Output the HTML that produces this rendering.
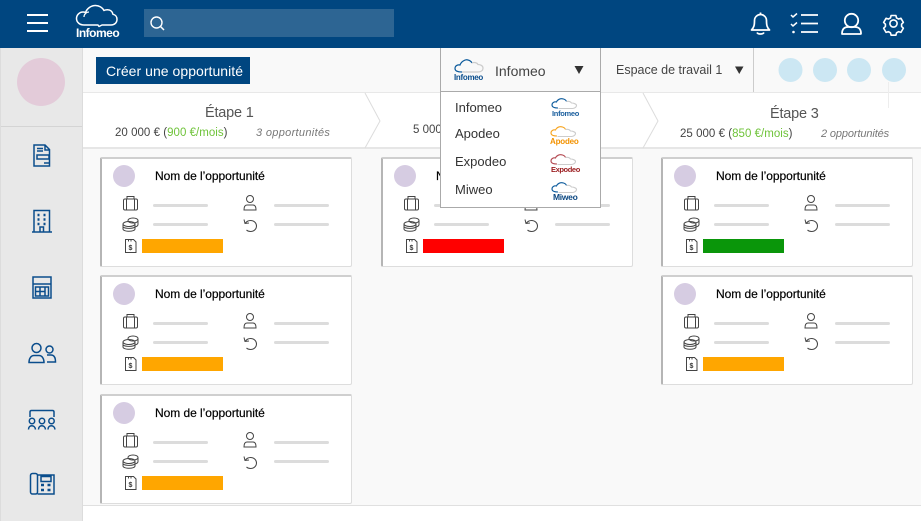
<!DOCTYPE html>
<html lang="fr"><head><meta charset="utf-8"><title>Infomeo</title>
<style>
html,body{margin:0;padding:0}
body{width:921px;height:521px;position:relative;overflow:hidden;background:#f9f9f9;font-family:"Liberation Sans",sans-serif;color:#333}
.a{position:absolute;box-sizing:border-box}
.t{position:absolute;white-space:nowrap;line-height:1}
svg{position:absolute;overflow:visible}
.card{position:absolute;box-sizing:border-box;width:252px;height:110px;background:#fff;border:1px solid #ddd;border-left:2px solid #b5b5b5;border-top:2px solid #cfcfcf;border-radius:2px}
.card .c{position:absolute;left:11px;top:6px;width:22px;height:22px;border-radius:50%;background:#d6cce2}
.card .n{position:absolute;left:53px;top:10px;font-size:12px;line-height:14px;color:#000;white-space:nowrap;letter-spacing:-.05px;-webkit-text-stroke:.2px #000}
.card .l{position:absolute;width:55px;height:3px;border-radius:2px;background:#dcdcdc}
.card .b{position:absolute;left:40px;top:80px;width:81px;height:14px}
.card svg{fill:none;stroke:#444;stroke-width:1}
</style></head><body>

<!-- header -->
<div class="a" style="left:0;top:0;width:921px;height:48px;background:#004680"></div>
<div class="a" style="left:144px;top:9px;width:250px;height:28px;background:#2d6593"></div>
<svg style="left:0;top:0" width="921" height="48" fill="none" stroke="#fff" stroke-width="2">
<path d="M27 15h21M27 23h21M27 31h21"/>
<path d="M98 25H84c-4 0-7.500-2.500-7.500-6.500 0-3.500 3-6.500 6.500-6.500 1 0 1.500 0 2.500.5C87 8.500 91 5.500 95.500 5.500c3.500 0 7 2 8.500 5 1-.5 2-.7 3.500-.7 3 0 5 2 5.500 4.500 2.500.5 4 2.500 4 5 0 3.500-2.500 5.700-6 5.700H102l-3 1.500z" stroke-width="1.500" stroke-linejoin="round"/>
<path d="M84 17c0-3 2.500-5 5-5" stroke-width="1.200"/>
<circle cx="156.500" cy="22.500" r="5.500" stroke-width="1.400"/><path d="M160.500 26.500l3.500 3.500" stroke-width="1.500"/>
<!-- bell -->
<path d="M751.500 30c2.500-2.500 3-5 3-9.500 0-3.500 3-6 6-6s6 2.500 6 6c0 4.500.5 7 3 9.500z" stroke-width="1.700" stroke-linejoin="round"/><path d="M760.500 12.500v2M757 32.500c1 2 6 2 7 0" stroke-width="1.700"/>
<!-- tasks -->
<path d="M791 15l2 2 4-3.500M791 24l2 2 4-3.500" stroke-width="1.500"/><path d="M801 15h17M801 23.500h17M801 32h17" stroke-width="1.800"/><circle cx="793.500" cy="32" r="1.300" fill="#fff" stroke="none"/>
<!-- user -->
<circle cx="851.500" cy="20.500" r="6.700" stroke-width="1.800"/><path d="M842 34c0-4.500 2-7 6-7h7c4 0 6 2.500 6 6.500 0 .5 0 .5-.5.5z" stroke-width="1.800" stroke-linejoin="round"/>
<!-- gear -->
<circle cx="893.500" cy="23.500" r="3.600" stroke-width="1.600"/>
<g transform="translate(893.500 23.500) scale(.8) translate(-893.500 -23)"><path d="M890.500 13.500h6l.8 3 2.500 1.400 3-.9 3 5.200-2.200 2.200v2.800l2.200 2.200-3 5.200-3-.9-2.500 1.400-.8 3h-6l-.8-3-2.500-1.400-3 .9-3-5.200 2.200-2.200v-2.800l-2.200-2.200 3-5.200 3 .9 2.500-1.400z" stroke-width="2" stroke-linejoin="round" transform="translate(0 -.5)"/></g>
</svg>
<div class="t" style="left:76px;top:27px;font-size:12px;font-weight:bold;color:#fff;letter-spacing:-.5px">Infomeo</div>

<!-- sidebar -->
<div class="a" style="left:0;top:48px;width:83px;height:473px;background:#e8e8e8;border-left:1px solid #dcdcdc;border-right:1px solid #dcdcdc"></div>
<div class="a" style="left:1px;top:126px;width:81px;height:1px;background:#d4d4d4"></div>
<div class="a" style="left:17px;top:58px;width:48px;height:48px;border-radius:50%;background:#e3cbd9"></div>
<svg style="left:0;top:0" width="83" height="521" fill="none" stroke="#0a4d8c" stroke-width="1.500">
<path d="M34 145h11l4.500 4.500V166H34zM45 145v5h4.500M37 148.500h6M37 151h6M37 155h12v4H37zM44 163h5"/>
<path d="M34 210.500h15.500V232H34zM32 232H52M40 232v-5h3.500v5"/>
<path d="M37.500 215h2M43.500 215h2M37.500 219.500h2M43.500 219.500h2M37.500 224h2M43.500 224h2" stroke-width="2.500"/>
<path d="M33 277h18v21H33zM33 284h18M35.500 287h13v9h-13zM35.500 291.500h10M40 287v9M45 287v9"/>
<circle cx="36.500" cy="348" r="4.500"/><circle cx="49.500" cy="349.500" r="3.500"/>
<path d="M29 362.500c0-4 2-7 5-7h5c3 0 5 3 5 7zM47 355h4c3 0 4.500 2.500 4.500 7H47"/>
<path d="M30 417v-5c0-1 .5-1.500 1.500-1.500h21c1 0 1.500.5 1.500 1.500v5"/>
<circle cx="32" cy="421" r="2.700"/><circle cx="42" cy="421" r="2.700"/><circle cx="51.500" cy="421" r="2.700"/>
<path d="M28.500 429.500c0-5 6.500-5 7 0M38.500 429.500c0-5 6.500-5 7 0M48 429.500c0-5 6.500-5 7 0"/>
<rect x="30.500" y="473.500" width="7" height="20.500" rx="2"/><path d="M37.500 475h16.500v19H37.500M41 476.500h10v5H41z"/>
<path d="M41 485h3M47.500 485h3M41 490h3M47.500 490h3" stroke-width="2.500"/>
</svg>

<!-- toolbar -->
<div class="a" style="left:83px;top:48px;width:838px;height:44px;background:#f9f9f9"></div>
<div class="a" style="left:96px;top:57px;width:154px;height:27px;background:#004680"></div>
<div class="t" style="left:106px;top:64px;font-size:14px;color:#fff;letter-spacing:.04px">Créer une opportunité</div>

<!-- stage bar -->
<div class="a" style="left:83px;top:92px;width:838px;height:57px;background:#fff;border-top:1px solid #e8e8e8;border-bottom:2px solid #e6e6e6"></div>
<svg style="left:0;top:0" width="921" height="150" fill="none" stroke="#dcdcdc">
<path d="M365 93l15 28-15 27M643 93l15 28-15 27"/>
</svg>
<div class="t" style="left:205px;top:106px;font-size:14.500px;color:#555;letter-spacing:-.2px">Étape 1</div>
<div class="t" style="left:115px;top:128px;font-size:11.500px;color:#444;letter-spacing:.03px">20 000 € (<span style="color:#6fc33a">900 €/mois</span>)</div>
<div class="t" style="left:256px;top:128px;font-size:11px;color:#777;font-style:italic;letter-spacing:.32px">3 opportunités</div>
<div class="t" style="left:413px;top:125px;font-size:11.500px;color:#444">5 000</div>
<div class="t" style="left:770px;top:107px;font-size:14.500px;color:#555;letter-spacing:-.2px">Étape 3</div>
<div class="t" style="left:680px;top:129px;font-size:11.500px;color:#444;letter-spacing:.03px">25 000 € (<span style="color:#6fc33a">850 €/mois</span>)</div>
<div class="t" style="left:821px;top:129px;font-size:11px;color:#777;font-style:italic;letter-spacing:-.12px">2 opportunités</div>

<!-- workspace / circles -->
<div class="t" style="left:616px;top:64px;font-size:12.500px;color:#444">Espace de travail 1</div>
<svg style="left:0;top:0" width="921" height="110">
<path d="M735 66.500h8.500l-4.250 7.500z" fill="#333"/>
<path d="M753.500 48v44" stroke="#ccc" fill="none"/>
<circle cx="790.500" cy="70" r="12" fill="#cce7f3"/><circle cx="825" cy="70" r="12" fill="#cce7f3"/><circle cx="859" cy="70" r="12" fill="#cce7f3"/><circle cx="894" cy="70" r="12" fill="#cce7f3"/>
<path d="M888.500 82v26" stroke="#ededed" fill="none"/>
</svg>

<!-- cards -->
<div class="card" style="left:100px;top:157px"><div class="c"></div><div class="n">Nom de l’opportunité</div><div class="l" style="left:51px;top:45px"></div><div class="l" style="left:172px;top:45px"></div><div class="l" style="left:51px;top:64px"></div><div class="l" style="left:172px;top:64px"></div><div class="b" style="background:#ffa600"></div><svg style="left:0;top:0" width="250" height="105"><rect x="21.500" y="40" width="14" height="11" rx="1.500"/><path d="M25 40v-2.500h7V40M24.500 40v11M32.500 40v11"/><ellipse cx="31" cy="61.500" rx="5" ry="2.500"/><ellipse cx="27" cy="65" rx="6" ry="2.500"/><path d="M21 65v5c0 3 12 3 12 0v-5M21 67.500c0 2.500 12 2.500 12 0M36 61.500v4c0 1-1 2-3 2.500"/><path d="M23.500 80.500h8l2.500 2.500v10.500H23.500zM26.500 80.500v2M29 80.500v2"/><text x="26.500" y="91" font-size="7" font-weight="bold" fill="#333" stroke="none" font-family="Liberation Sans">$</text><circle cx="148" cy="40" r="3.500"/><path d="M142 51c0-3.500 1-5 3-5h6c2 0 3 1.500 3 5z"/><path d="M142 60.500l1 4 4-.5M143 64.500c1.500-2 3.500-3 5.500-3 3.500 0 6 2.500 6 5.500s-2.500 5.500-6 5.500c-1.500 0-3-.5-4-1.500"/></svg></div>
<div class="card" style="left:100px;top:275px"><div class="c"></div><div class="n">Nom de l’opportunité</div><div class="l" style="left:51px;top:45px"></div><div class="l" style="left:172px;top:45px"></div><div class="l" style="left:51px;top:64px"></div><div class="l" style="left:172px;top:64px"></div><div class="b" style="background:#ffa600"></div><svg style="left:0;top:0" width="250" height="105"><rect x="21.500" y="40" width="14" height="11" rx="1.500"/><path d="M25 40v-2.500h7V40M24.500 40v11M32.500 40v11"/><ellipse cx="31" cy="61.500" rx="5" ry="2.500"/><ellipse cx="27" cy="65" rx="6" ry="2.500"/><path d="M21 65v5c0 3 12 3 12 0v-5M21 67.500c0 2.500 12 2.500 12 0M36 61.500v4c0 1-1 2-3 2.500"/><path d="M23.500 80.500h8l2.500 2.500v10.500H23.500zM26.500 80.500v2M29 80.500v2"/><text x="26.500" y="91" font-size="7" font-weight="bold" fill="#333" stroke="none" font-family="Liberation Sans">$</text><circle cx="148" cy="40" r="3.500"/><path d="M142 51c0-3.500 1-5 3-5h6c2 0 3 1.500 3 5z"/><path d="M142 60.500l1 4 4-.5M143 64.500c1.500-2 3.500-3 5.500-3 3.500 0 6 2.500 6 5.500s-2.500 5.500-6 5.500c-1.500 0-3-.5-4-1.500"/></svg></div>
<div class="card" style="left:100px;top:394px"><div class="c"></div><div class="n">Nom de l’opportunité</div><div class="l" style="left:51px;top:45px"></div><div class="l" style="left:172px;top:45px"></div><div class="l" style="left:51px;top:64px"></div><div class="l" style="left:172px;top:64px"></div><div class="b" style="background:#ffa600"></div><svg style="left:0;top:0" width="250" height="105"><rect x="21.500" y="40" width="14" height="11" rx="1.500"/><path d="M25 40v-2.500h7V40M24.500 40v11M32.500 40v11"/><ellipse cx="31" cy="61.500" rx="5" ry="2.500"/><ellipse cx="27" cy="65" rx="6" ry="2.500"/><path d="M21 65v5c0 3 12 3 12 0v-5M21 67.500c0 2.500 12 2.500 12 0M36 61.500v4c0 1-1 2-3 2.500"/><path d="M23.500 80.500h8l2.500 2.500v10.500H23.500zM26.500 80.500v2M29 80.500v2"/><text x="26.500" y="91" font-size="7" font-weight="bold" fill="#333" stroke="none" font-family="Liberation Sans">$</text><circle cx="148" cy="40" r="3.500"/><path d="M142 51c0-3.500 1-5 3-5h6c2 0 3 1.500 3 5z"/><path d="M142 60.500l1 4 4-.5M143 64.500c1.500-2 3.500-3 5.500-3 3.500 0 6 2.500 6 5.500s-2.500 5.500-6 5.500c-1.500 0-3-.5-4-1.500"/></svg></div>
<div class="card" style="left:381px;top:157px;width:252px"><div class="c"></div><div class="n">Nom de l’opportunité</div><div class="l" style="left:51px;top:45px"></div><div class="l" style="left:172px;top:45px"></div><div class="l" style="left:51px;top:64px"></div><div class="l" style="left:172px;top:64px"></div><div class="b" style="background:#f00"></div><svg style="left:0;top:0" width="250" height="105"><rect x="21.500" y="40" width="14" height="11" rx="1.500"/><path d="M25 40v-2.500h7V40M24.500 40v11M32.500 40v11"/><ellipse cx="31" cy="61.500" rx="5" ry="2.500"/><ellipse cx="27" cy="65" rx="6" ry="2.500"/><path d="M21 65v5c0 3 12 3 12 0v-5M21 67.500c0 2.500 12 2.500 12 0M36 61.500v4c0 1-1 2-3 2.500"/><path d="M23.500 80.500h8l2.500 2.500v10.500H23.500zM26.500 80.500v2M29 80.500v2"/><text x="26.500" y="91" font-size="7" font-weight="bold" fill="#333" stroke="none" font-family="Liberation Sans">$</text><circle cx="148" cy="40" r="3.500"/><path d="M142 51c0-3.500 1-5 3-5h6c2 0 3 1.500 3 5z"/><path d="M142 60.500l1 4 4-.5M143 64.500c1.500-2 3.500-3 5.500-3 3.500 0 6 2.500 6 5.500s-2.500 5.500-6 5.500c-1.500 0-3-.5-4-1.500"/></svg></div>
<div class="card" style="left:661px;top:157px"><div class="c"></div><div class="n">Nom de l’opportunité</div><div class="l" style="left:51px;top:45px"></div><div class="l" style="left:172px;top:45px"></div><div class="l" style="left:51px;top:64px"></div><div class="l" style="left:172px;top:64px"></div><div class="b" style="background:#0a960a"></div><svg style="left:0;top:0" width="250" height="105"><rect x="21.500" y="40" width="14" height="11" rx="1.500"/><path d="M25 40v-2.500h7V40M24.500 40v11M32.500 40v11"/><ellipse cx="31" cy="61.500" rx="5" ry="2.500"/><ellipse cx="27" cy="65" rx="6" ry="2.500"/><path d="M21 65v5c0 3 12 3 12 0v-5M21 67.500c0 2.500 12 2.500 12 0M36 61.500v4c0 1-1 2-3 2.500"/><path d="M23.500 80.500h8l2.500 2.500v10.500H23.500zM26.500 80.500v2M29 80.500v2"/><text x="26.500" y="91" font-size="7" font-weight="bold" fill="#333" stroke="none" font-family="Liberation Sans">$</text><circle cx="148" cy="40" r="3.500"/><path d="M142 51c0-3.500 1-5 3-5h6c2 0 3 1.500 3 5z"/><path d="M142 60.500l1 4 4-.5M143 64.500c1.500-2 3.500-3 5.500-3 3.500 0 6 2.500 6 5.500s-2.500 5.500-6 5.500c-1.500 0-3-.5-4-1.500"/></svg></div>
<div class="card" style="left:661px;top:275px"><div class="c"></div><div class="n">Nom de l’opportunité</div><div class="l" style="left:51px;top:45px"></div><div class="l" style="left:172px;top:45px"></div><div class="l" style="left:51px;top:64px"></div><div class="l" style="left:172px;top:64px"></div><div class="b" style="background:#ffa600"></div><svg style="left:0;top:0" width="250" height="105"><rect x="21.500" y="40" width="14" height="11" rx="1.500"/><path d="M25 40v-2.500h7V40M24.500 40v11M32.500 40v11"/><ellipse cx="31" cy="61.500" rx="5" ry="2.500"/><ellipse cx="27" cy="65" rx="6" ry="2.500"/><path d="M21 65v5c0 3 12 3 12 0v-5M21 67.500c0 2.500 12 2.500 12 0M36 61.500v4c0 1-1 2-3 2.500"/><path d="M23.500 80.500h8l2.500 2.500v10.500H23.500zM26.500 80.500v2M29 80.500v2"/><text x="26.500" y="91" font-size="7" font-weight="bold" fill="#333" stroke="none" font-family="Liberation Sans">$</text><circle cx="148" cy="40" r="3.500"/><path d="M142 51c0-3.500 1-5 3-5h6c2 0 3 1.500 3 5z"/><path d="M142 60.500l1 4 4-.5M143 64.500c1.500-2 3.500-3 5.500-3 3.500 0 6 2.500 6 5.500s-2.500 5.500-6 5.500c-1.500 0-3-.5-4-1.500"/></svg></div>

<!-- bottom strip -->
<div class="a" style="left:83px;top:505px;width:838px;height:16px;background:#fff;border-top:1px solid #e0e0e0"></div>

<!-- dropdown -->
<div class="a" style="left:440px;top:48px;width:161px;height:160px;background:#fff;border:1px solid #aaa;border-top:none"></div>
<div class="a" style="left:441px;top:48px;width:159px;height:44px;background:#f9f9f9;border-bottom:1px solid #aaa"></div>
<div class="t" style="left:495px;top:64px;font-size:14px;color:#444">Infomeo</div>
<div class="t" style="left:455px;top:101px;font-size:13px;color:#333">Infomeo</div>
<div class="t" style="left:455px;top:127px;font-size:13px;color:#333">Apodeo</div>
<div class="t" style="left:455px;top:155px;font-size:13px;color:#333">Expodeo</div>
<div class="t" style="left:455px;top:183px;font-size:13px;color:#333">Miweo</div>
<svg style="left:0;top:0" width="921" height="210" fill="none">
<path d="M574.500 66h9l-4.500 8z" fill="#333"/>
<path d="M462 72c-3 0-7-.500-7-3.500s3-4 5-3.500c1-3 5-6 8-5 2 .5 3 1 4 3" stroke="#0b5a9c" stroke-width="1.200"/><path d="M472 63c2-1 5-.500 6 1.500 2 0 5 1 5 3.500s-2 4-5 4h-16" stroke="#ccc" stroke-width="1.200"/>
<path d="M558 108c-3 0-6-.500-6-3s2.500-3.500 4.500-3c1-2.500 4-4 7-3 1.500.5 2.500 1 3 2.500" stroke="#0b5a9c" stroke-width="1.100"/><path d="M566.500 101.500c2-.500 4 0 5 1.500 2 0 5 1 5 2.500s-2 3-4 3h-14" stroke="#ccc" stroke-width="1.100"/>
<path d="M557 136c-3 0-6-.500-6-3s2.500-3.500 4.500-3c1-2.500 4-4 7-3 1.500.5 2.500 1 3 2.500" stroke="#f7a21a" stroke-width="1.100"/><path d="M565.500 129.500c2-.500 4 0 5 1.500 2 0 5 1 5 2.500s-2 3-4 3h-14" stroke="#ccc" stroke-width="1.100"/>
<path d="M557 164c-3 0-6-.500-6-3s2.500-3.500 4.500-3c1-2.500 4-4 7-3 1.500.5 2.500 1 3 2.500" stroke="#b3474f" stroke-width="1.100"/><path d="M565.500 157.500c2-.500 4 0 5 1.500 2 0 5 1 5 2.500s-2 3-4 3h-14" stroke="#ccc" stroke-width="1.100"/>
<path d="M558 192c-3 0-6-.500-6-3s2.500-3.500 4.500-3c1-2.500 4-4 7-3 1.500.5 2.500 1 3 2.500" stroke="#0b5a9c" stroke-width="1.100"/><path d="M566.500 185.500c2-.500 4 0 5 1.500 2 0 5 1 5 2.500s-2 3-4 3h-14" stroke="#ccc" stroke-width="1.100"/>
</svg>
<div class="t" style="left:454px;top:74px;font-size:8px;font-weight:bold;color:#0a4d8c;letter-spacing:-.3px">Infomeo</div>
<div class="t" style="left:552px;top:110px;font-size:7.500px;font-weight:bold;color:#1b5f9e;letter-spacing:-.3px">Infomeo</div>
<div class="t" style="left:550px;top:138px;font-size:8px;font-weight:bold;color:#f39200;letter-spacing:-.2px">Apodeo</div>
<div class="t" style="left:551px;top:166px;font-size:7.500px;font-weight:bold;color:#9b1c1f;letter-spacing:-.4px">Expodeo</div>
<div class="t" style="left:553px;top:193px;font-size:8.500px;font-weight:bold;color:#0a4680;letter-spacing:-.3px">Miweo</div>

</body></html>
